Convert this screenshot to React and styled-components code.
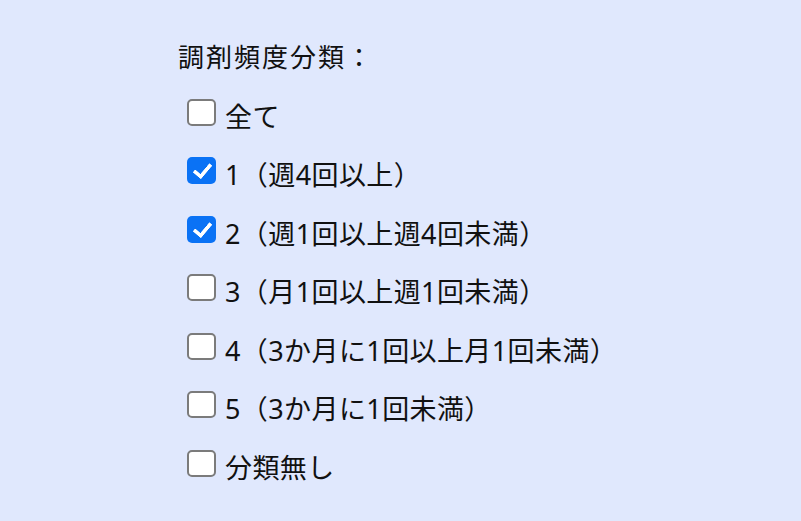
import React, { useState } from 'react';
import styled, { createGlobalStyle } from 'styled-components';

const GlobalStyle = createGlobalStyle`
  html, body {
    margin: 0;
    padding: 0;
    background: #e0e8fd;
  }
  body {
    font-family: "Noto Sans", "Noto Sans CJK JP", sans-serif;
    color: #111;
  }
`;

const Panel = styled.div`
  width: 801px;
  height: 521px;
  box-sizing: border-box;
  padding: 38px 0 0 178px;
  background: #e0e8fd;
`;

const Title = styled.div`
  font-size: 26px;
  line-height: 38px;
  letter-spacing: 2px;
`;

const List = styled.div`
  display: flex;
  flex-direction: column;
  margin-top: 10px;
  margin-left: 9px;
`;

const Row = styled.label`
  display: flex;
  align-items: center;
  height: 58.5px;
  font-size: 27px;
  letter-spacing: 0.4px;
  cursor: pointer;
`;

const Box = styled.input.attrs({ type: 'checkbox' })`
  appearance: none;
  margin: 0 9px 6px 0;
  width: 29px;
  height: 27px;
  box-sizing: border-box;
  border-radius: 5px;
  border: 2.5px solid #7b7b7b;
  background: #fff;
  flex-shrink: 0;
  position: relative;
  cursor: pointer;

  &:checked {
    border: none;
    background: #0a72f5;
  }
  &:checked::after {
    content: '';
    position: absolute;
    left: 10px;
    top: 3px;
    width: 7px;
    height: 14px;
    border: solid #fff;
    border-width: 0 4px 4px 0;
    border-radius: 1px;
    transform: rotate(40deg);
  }
`;

const items = [
  { label: '全て', checked: false },
  { label: '1（週4回以上）', checked: true },
  { label: '2（週1回以上週4回未満）', checked: true },
  { label: '3（月1回以上週1回未満）', checked: false },
  { label: '4（3か月に1回以上月1回未満）', checked: false },
  { label: '5（3か月に1回未満）', checked: false },
  { label: '分類無し', checked: false },
];

const App = () => {
  const [checks, setChecks] = useState(items.map((i) => i.checked));

  const toggle = (index) => {
    setChecks(checks.map((c, i) => (i === index ? !c : c)));
  };

  return (
    <>
      <GlobalStyle />
      <Panel>
        <Title>調剤頻度分類：</Title>
        <List>
          {items.map((item, index) => (
            <Row key={index}>
              <Box checked={checks[index]} onChange={() => toggle(index)} />
              {item.label}
            </Row>
          ))}
        </List>
      </Panel>
    </>
  );
};

export default App;
